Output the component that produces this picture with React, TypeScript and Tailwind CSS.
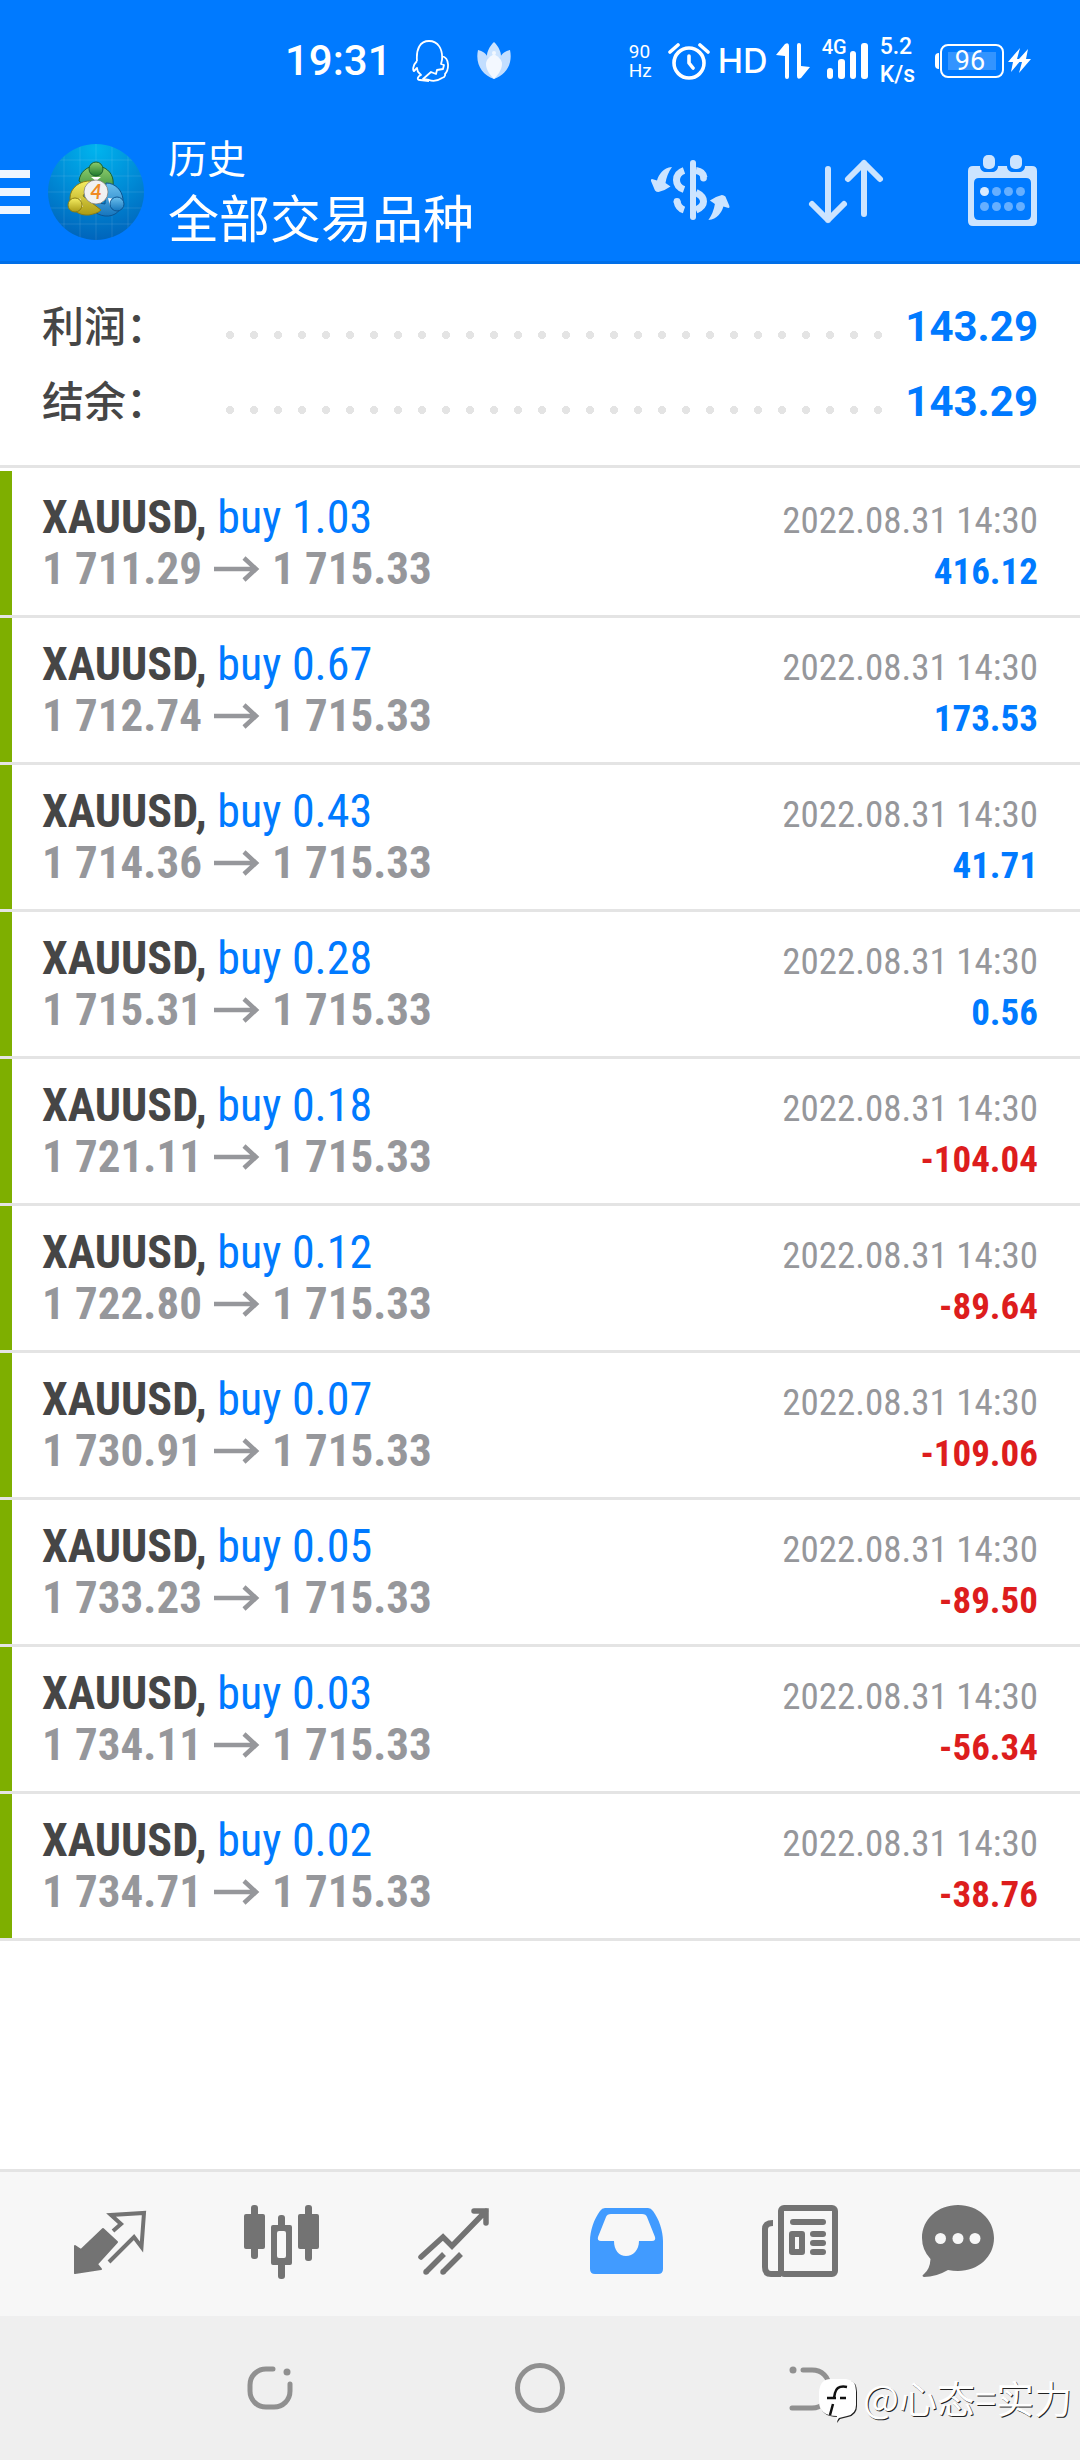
import type { ReactNode } from 'react';

type Deal = { volume: string; open: string; profit: string };

const deals: Deal[] = [
    { volume: '1.03', open: '1 711.29', profit: '416.12' },
    { volume: '0.67', open: '1 712.74', profit: '173.53' },
    { volume: '0.43', open: '1 714.36', profit: '41.71' },
    { volume: '0.28', open: '1 715.31', profit: '0.56' },
    { volume: '0.18', open: '1 721.11', profit: '-104.04' },
    { volume: '0.12', open: '1 722.80', profit: '-89.64' },
    { volume: '0.07', open: '1 730.91', profit: '-109.06' },
    { volume: '0.05', open: '1 733.23', profit: '-89.50' },
    { volume: '0.03', open: '1 734.11', profit: '-56.34' },
    { volume: '0.02', open: '1 734.71', profit: '-38.76' },
];

const totals = [
    { label: '利润：', value: '143.29' },
    { label: '结余：', value: '143.29' },
];

function StatusBar() {
    return (
        <div className="flex h-30 items-center justify-between pt-0.5 pl-[285px] pr-12">
            <div className="flex items-center gap-[18px]">
                <span className="text-[42px] leading-[48px] font-medium">19:31</span>
                <svg className="h-11 w-10" viewBox="0 0 40 44" fill="none" stroke="currentColor" strokeWidth="1.8" strokeLinejoin="round">
                    <path d="M7 22C6 10 10 2 19 2s14 8 13 19l-1 4 3 1-1 4-6 1-1 4-5-2-8 7 6 1c5 2 10 0 13-2 4-1 3-4 3-4 4-4 5-16-3-18" />
                    <path d="M7 22c-5 5-4 10-3 10l3-3c0 4 2 5 4 7-3 1-5 5-1 5l9 1" />
                </svg>
                <svg className="ml-2 h-10 w-9" viewBox="0 0 36 40">
                    <path d="M18 1c5 5 7 10 7 14 0 8-4 16-7 23-4-7-7-15-7-23 0-4 2-9 7-14Z" fill="#cce4ff" />
                    <path d="M2 9c9 2 13 9 16 29C6 34-1 23 2 9ZM34 9c-9 2-13 9-16 29C30 34 37 23 34 9Z" fill="#c2deff" />
                    <path d="M18 13c5 3 8 6 8 10 0 6-5 12-8 15-4-4-8-9-8-15 0-4 3-7 8-10Z" fill="#f3f8ff" />
                    <circle cx="18" cy="12" r="2" fill="#f3f8ff" />
                </svg>
            </div>
            <div className="flex items-center gap-2">
                <div className="flex flex-col text-[19px] leading-[19px]">
                    <span>90</span>
                    <span>Hz</span>
                </div>
                <svg className="ml-2 h-10 w-[42px]" viewBox="1 0 42 40" fill="none" stroke="currentColor" strokeWidth="3.6" strokeLinecap="round" strokeLinejoin="round">
                    <circle cx="22" cy="22" r="15" />
                    <path d="M22 15v7l4 5M3 11l8-7M41 11l-8-7" />
                </svg>
                <span className="font-['Inter'] text-[34px] leading-10 font-medium">HD</span>
                <svg className="mr-1 h-10 w-[34px]" viewBox="0 0 34 40" fill="currentColor">
                    <path d="M0 14 9 3q4-2 4 2v31q0 2-2 2t-2-2V15ZM34 26l-9 11q-4 2-4-2V4q0-2 2-2t2 2v21Z" />
                </svg>
                <div className="relative h-11 w-[46px]">
                    <span className="absolute top-0 left-0 text-[20px] leading-4 font-medium">4G</span>
                    <svg className="size-full" viewBox="0 0 46 44" fill="currentColor">
                        <rect x="5" y="29" width="6" height="11" rx="3" />
                        <rect x="16" y="20" width="7" height="20" rx="3" />
                        <rect x="28" y="12" width="6" height="28" rx="3" />
                        <rect x="39" y="4" width="7" height="36" rx="3" />
                    </svg>
                </div>
                <div className="ml-1 flex flex-col text-[23px] leading-7 font-medium">
                    <span>5.2</span>
                    <span>K/s</span>
                </div>
                <div className="ml-3 flex items-center">
                    <span className="mr-px h-4 w-1 rounded-l bg-white" />
                    <span className="flex h-[34px] w-16 items-center justify-center rounded-lg border-2 border-white p-1.5">
                        <span className="flex h-full w-full items-center justify-center bg-white/20 pr-1 text-[27px] leading-6">96</span>
                    </span>
                    <svg className="ml-1 h-7 w-6" viewBox="0 0 24 28" fill="currentColor">
                        <path d="M12 1 0 15h5L3 25l11-13H9ZM20 2l-9 10-1 3h4l-3 11 12-14h-5Z" />
                    </svg>
                </div>
            </div>
        </div>
    );
}

function AppLogo() {
    return (
        <svg className="size-24" viewBox="0 0 96 96">
            <defs>
                <radialGradient id="sky" cx="0.5" cy="0.05" r="1">
                    <stop offset="0" stopColor="#00b4ee" />
                    <stop offset="0.5" stopColor="#008bd6" />
                    <stop offset="1" stopColor="#0060b8" />
                </radialGradient>
                <linearGradient id="green" x1="0" y1="0" x2="0" y2="1">
                    <stop offset="0" stopColor="#8fce6e" />
                    <stop offset="1" stopColor="#1f7a2c" />
                </linearGradient>
                <linearGradient id="yellow" x1="0" y1="0" x2="0" y2="1">
                    <stop offset="0" stopColor="#f6ee62" />
                    <stop offset="1" stopColor="#aa9a14" />
                </linearGradient>
                <linearGradient id="blue" x1="0" y1="0" x2="0" y2="1">
                    <stop offset="0" stopColor="#6cc0ee" />
                    <stop offset="1" stopColor="#1575bd" />
                </linearGradient>
                <clipPath id="disc"><circle cx="48" cy="48" r="48" /></clipPath>
            </defs>
            <g clipPath="url(#disc)">
                <rect width="96" height="96" fill="url(#sky)" />
                <path d="M0 16h96M0 32h96M0 48h96M0 64h96M0 80h96M16 0v96M32 0v96M48 0v96M64 0v96M80 0v96" stroke="#fff" strokeOpacity="0.1" fill="none" />
            </g>
            <path d="M31 37c1-9 8-15 17-15s16 6 17 14c1 8-2 15-7 19l-9-18-13 4Z" fill="url(#green)" stroke="#1c6130" />
            <path d="M58 39c9 0 16 7 17 16 0 11-8 18-18 17-9-1-15-7-18-15l18 3Z" fill="url(#blue)" stroke="#0d5592" />
            <path d="M44 37c-12-1-22 7-22 17 0 11 8 18 19 17 5-1 9-2 12-5L35 52Z" fill="url(#yellow)" stroke="#8b7d12" />
            <path d="M43 33h10l-5 4ZM32 54l3 9-6-3ZM60 54l7 1-5 7Z" fill="#fff" />
            <circle cx="48" cy="25" r="7" fill="url(#green)" stroke="#1c6130" />
            <circle cx="27" cy="61" r="7" fill="url(#yellow)" stroke="#8b7d12" />
            <circle cx="69" cy="60" r="7" fill="url(#blue)" stroke="#0d5592" />
            <circle cx="48" cy="48" r="12" fill="#f1f1f1" stroke="#77766d" strokeWidth="0.7" />
            <text x="48" y="55" textAnchor="middle" fontSize="20" fontWeight="700" fontStyle="italic" fill="#f08a24" fontFamily="Lato, sans-serif">4</text>
        </svg>
    );
}

function Toolbar() {
    return (
        <div className="flex h-36 items-center shadow-[inset_0_-3px_0_#006fe8]">
            <button aria-label="Menu" className="flex w-[30px] shrink-0 flex-col gap-2.5">
                <span className="h-2 bg-[#eff6ff]" />
                <span className="h-2 bg-[#eff6ff]" />
                <span className="h-2 bg-[#eff6ff]" />
            </button>
            <div className="ml-[18px]"><AppLogo /></div>
            <h1 className="ml-6 flex-1 pb-1.5 font-['Noto_Sans_CJK_SC',sans-serif]">
                <span className="block text-[39px] leading-[54px]">历史</span>
                <span className="block text-[51px] leading-[66px]">全部交易品种</span>
            </h1>
            <div className="flex gap-[72px] pr-9 text-[#cce4ff]">
                <button aria-label="Currency">
                    <svg className="size-21" viewBox="0 0 84 84" fill="none" stroke="currentColor" strokeWidth="7">
                        <rect x="42" y="10" width="6" height="60" rx="3" fill="currentColor" stroke="none" />
                        <path d="M36 20.5C26 24 26 36 36 39.5M48 20.5q7 1 8 7M48 42.5c10 5 10 13 0 17.5M36 60q-6-2-7-9" />
                        <circle cx="55.5" cy="28" r="3.4" fill="currentColor" stroke="none" />
                        <circle cx="29" cy="51.5" r="3.4" fill="currentColor" stroke="none" />
                        <g fill="currentColor" stroke="none">
                            <path id="turn" d="M24 17C15 18 11 24 9 30.5L4 29q-1.5 0-1 2l4 9.5q1.5 1.5 3.5 1.5 6.5-1.5 12-5.5L17.5 33Q19 24 24 17Z" />
                            <use href="#turn" transform="rotate(180 42.2 43.5)" />
                        </g>
                    </svg>
                </button>
                <button aria-label="Sort">
                    <svg className="size-21" viewBox="0 0 84 84" fill="none" stroke="currentColor" strokeWidth="6" strokeLinecap="round" strokeLinejoin="round">
                        <path d="M24 19v51M8 54l16 16 16-16M60 64V13M44 29l16-16 16 16" />
                    </svg>
                </button>
                <button aria-label="Period">
                    <svg className="size-21" viewBox="0 0 84 84" fill="currentColor">
                        <path fillRule="evenodd" d="M13 16h7c0 4 3 6 6 6h6c3 0 6-2 6-6h9c0 4 3 6 6 6h6c3 0 6-2 6-6h7q5 0 5 5v50q0 5-5 5H13q-5 0-5-5V21q0-5 5-5Zm6 12q-5 0-5 5v32q0 5 5 5h47q5 0 5-5V33q0-5-5-5Z" />
                        <rect x="23" y="5" width="12" height="14" rx="5" />
                        <rect x="50" y="5" width="12" height="14" rx="5" />
                        <circle cx="24.5" cy="41.5" r="4.5" fill="#d9ebff" />
                        <g fill="#66afff">
                            <circle cx="36.5" cy="41.5" r="4.5" />
                            <circle cx="48.5" cy="41.5" r="4.5" />
                            <circle cx="60.5" cy="41.5" r="4.5" />
                            <circle cx="24.5" cy="56.5" r="4.5" />
                            <circle cx="36.5" cy="56.5" r="4.5" />
                            <circle cx="48.5" cy="56.5" r="4.5" />
                            <circle cx="60.5" cy="56.5" r="4.5" />
                        </g>
                    </svg>
                </button>
            </div>
        </div>
    );
}

function DealRow({ deal }: { deal: Deal }) {
    const loss = deal.profit.startsWith('-');
    return (
        <li className="border-b-3 border-[#e4e4e4]">
            <div className="border-l-12 border-[#7eaf00] py-[21px] pr-[42px] pl-[30px] leading-[51px]">
                <div className="flex items-baseline justify-between">
                    <p className="text-[46px] text-[#007aff]">
                        <b className="font-bold text-[#464646]">XAUUSD,</b> buy {deal.volume}
                    </p>
                    <time className="text-[37px] leading-[42px] text-[#96979b]">2022.08.31 14:30</time>
                </div>
                <div className="flex items-baseline justify-between font-bold">
                    <p className="flex items-center gap-3 text-[45px] text-[#96979b]">
                        {deal.open}
                        <svg className="h-[26px] w-[46px]" viewBox="0 0 46 26" fill="none" stroke="currentColor" strokeWidth="4.5">
                            <path d="M0 13h42M30 2l12 11-12 11" />
                        </svg>
                        1 715.33
                    </p>
                    <span className={loss ? 'text-[37px] leading-[42px] text-[#dd1d1d]' : 'text-[37px] leading-[42px] text-[#007aff]'}>{deal.profit}</span>
                </div>
            </div>
        </li>
    );
}

function Tab({ label, active, children }: { label: string; active?: boolean; children: ReactNode }) {
    return (
        <button aria-label={label} className={active ? 'flex flex-1 justify-center text-[#419bff]' : 'flex flex-1 justify-center text-[#737373]'}>
            <svg className="size-24" viewBox="0 0 96 96" fill="currentColor">{children}</svg>
        </button>
    );
}

function TabBar() {
    return (
        <nav className="flex h-[147px] items-center border-t-3 border-[#e4e4e4] bg-[#f7f7f7] px-6">
            <Tab label="Quotes">
                <path d="m13 50 6 4 22-21 14 13-20 22 4 5-26 4Z" stroke="currentColor" strokeWidth="2" strokeLinejoin="round" />
                <path d="m51 35 8-7-10-9 33-2-2.5 34L72 41 47 66" fill="none" stroke="currentColor" strokeWidth="4" />
            </Tab>
            <Tab label="Charts">
                <rect x="10" y="18" width="21" height="35" rx="2" />
                <rect x="17" y="9" width="7" height="54" rx="3" />
                <path fillRule="evenodd" d="M39 29h17q2 0 2 2v36q0 2-2 2H39q-2 0-2-2V31q0-2 2-2Zm6 6q-2 0-2 2v23q0 2 2 2h5q2 0 2-2V37q0-2-2-2Z" />
                <rect x="44" y="19" width="7" height="13" rx="3" />
                <rect x="44" y="66" width="7" height="17" rx="3" />
                <rect x="64" y="18" width="21" height="35" rx="2" />
                <rect x="71" y="9" width="7" height="56" rx="3" />
            </Tab>
            <Tab label="Trade">
                <g fill="none" stroke="currentColor" strokeWidth="5.5">
                    <path d="m15 61 22-20 9 9 34-35M68 15h12v12" strokeLinecap="round" />
                    <path d="m20 76 18-18M37 76l18-18" />
                    <path d="M20 76h0M37 76h0" strokeLinecap="round" />
                </g>
            </Tab>
            <Tab label="History" active>
                <path fillRule="evenodd" d="M27 12h43q3 0 5 3c6 8 10 20 10 30v28q0 5-5 5H17q-5 0-5-5V45c0-10 4-22 10-30q2-3 5-3Zm6 6q-4 0-5 3l-8 20q-1 4 3 4h13c0 9 5 15 12 15s13-6 13-15h13q4 0 3-4l-8-20q-1-3-5-3Z" />
            </Tab>
            <Tab label="News">
                <g fill="none" stroke="currentColor" strokeWidth="6">
                    <rect x="31" y="12" width="54" height="66" rx="3" />
                    <path d="M23 27q-8 0-8 6v38q0 7 6 7h10" />
                </g>
                <rect x="40" y="23" width="36" height="6" rx="3" />
                <path fillRule="evenodd" d="M42 35h10q3 0 3 3v18q0 3-3 3H42q-3 0-3-3V38q0-3 3-3Zm3 6v12h4V41Z" />
                <rect x="60" y="35" width="16" height="6" rx="3" />
                <rect x="60" y="44" width="16" height="6" rx="3" />
                <rect x="60" y="53" width="16" height="6" rx="3" />
            </Tab>
            <Tab label="Messages">
                <path d="M36 9c20 0 36 14 36 33S56 75 36 75q-5 0-10-1-12 7-24 7-3-1 0-3 6-5 6.500-15Q0 54 0 42C0 23 16 9 36 9Z" />
                <g fill="#f7f7f7">
                    <circle cx="18.5" cy="42.5" r="5.5" />
                    <circle cx="36" cy="42.5" r="5.5" />
                    <circle cx="53" cy="42.5" r="5.5" />
                </g>
            </Tab>
        </nav>
    );
}

function SystemBar() {
    return (
        <div className="relative grid h-36 grid-cols-3 place-items-center bg-[#efefef] px-[12.5%] text-[#909090]">
            <button aria-label="Recent">
                <svg className="size-15" viewBox="0 0 60 60" fill="none" stroke="currentColor" strokeWidth="5" strokeLinecap="round">
                    <path d="M33 11h-7c-9 0-16 7-16 16v6c0 9 7 16 16 16h8c9 0 16-7 16-16v-7" />
                    <circle cx="47" cy="14" r="3.5" fill="currentColor" stroke="none" />
                </svg>
            </button>
            <button aria-label="Home">
                <svg className="size-15" viewBox="0 0 60 60" fill="none" stroke="currentColor" strokeWidth="5">
                    <circle cx="30" cy="30" r="22.5" />
                </svg>
            </button>
            <button aria-label="Back">
                <svg className="size-15" viewBox="0 0 60 60" fill="none" stroke="currentColor" strokeWidth="5" strokeLinecap="round">
                    <path d="M23 12h9c10 0 17 7 17 17v4c0 10-7 17-17 17H12" />
                    <circle cx="13" cy="12" r="3.5" fill="currentColor" stroke="none" />
                </svg>
            </button>
            <div className="absolute right-2 bottom-9 flex items-center gap-1 text-white">
                <svg className="mt-2 h-[46px] w-10" viewBox="0 0 40 46">
                    <path d="M13 2h15q10 1 10 12v14q0 9-9 11l-8 2-3 4 1-6q-18 0-18-15V15Q2 2 13 2Z" fill="#222" />
                    <path d="M12 1h15q10 1 10 12v14q0 9-9 11l-8 2-3 4 1-6q-18 0-18-15V14Q1 1 12 1Z" fill="#fff" />
                    <path d="M28 9q-10-2-12 6l-1 5M8 20h9M21 20h6M14 26l-3 11" fill="none" stroke="#111" strokeWidth="2.5" />
                </svg>
                <span className="font-['Noto_Sans_CJK_SC',sans-serif] text-[38px] leading-[50px] [text-shadow:1px_1px_0_#222]">@心态=实力</span>
            </div>
        </div>
    );
}

export default function App() {
    return (
        <div className="flex min-h-screen flex-col bg-white font-['Roboto_Condensed','Liberation_Sans_Narrow','Roboto',sans-serif]">
            <header className="bg-[#007aff] font-['Roboto',sans-serif] text-white">
                <StatusBar />
                <Toolbar />
            </header>
            <main className="flex-1">
                <dl className="border-b-3 border-[#e4e4e4] px-[42px] pt-[25px] pb-[26px] font-['Roboto','Noto_Sans_CJK_SC',sans-serif] text-[42px] leading-[75px]">
                    {totals.map((t) => (
                        <div key={t.label} className="flex items-center">
                            <dt className="w-44 pb-1.5 font-['Noto_Sans_CJK_SC',sans-serif] leading-[69px] font-medium text-[#464646]">{t.label}</dt>
                            <span className="mt-4 h-6 flex-1 bg-[radial-gradient(circle,#e4e4e4_4px,transparent_4px)] bg-size-[24px_24px]" />
                            <dd className="pl-4 font-bold text-[#007aff]">{t.value}</dd>
                        </div>
                    ))}
                </dl>
                <ul className="pt-[3px]">
                    {deals.map((deal) => <DealRow key={deal.open} deal={deal} />)}
                </ul>
            </main>
            <TabBar />
            <SystemBar />
        </div>
    );
}
